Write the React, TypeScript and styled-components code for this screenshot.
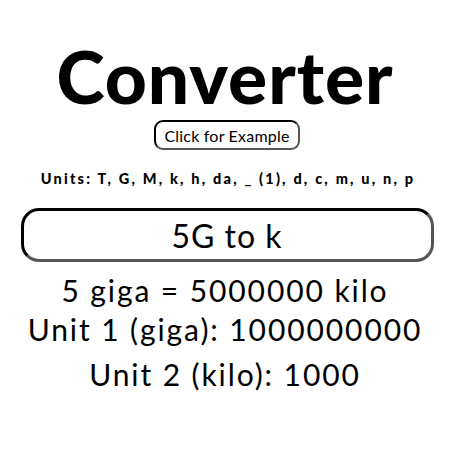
import styled, { createGlobalStyle } from 'styled-components';

const GlobalStyle = createGlobalStyle`
  html, body {
    margin: 0;
    padding: 0;
    background: #ffffff;
  }
  body {
    font-family: "Lato", "Noto Sans", sans-serif;
    color: #000000;
  }
`;

const Page = styled.div`
  width: 450px;
  height: 450px;
  display: flex;
  flex-direction: column;
  align-items: center;
  padding-top: 36px;
  box-sizing: border-box;
`;

const Title = styled.h1`
  margin: 0;
  font-size: 73px;
  font-weight: 900;
  line-height: 80px;
  letter-spacing: 1px;
`;

const ExampleButton = styled.button`
  margin-top: 4px;
  margin-left: 4px;
  height: 30px;
  padding: 0 8px;
  font-family: "Lato", sans-serif;
  font-size: 16px;
  letter-spacing: 0.2px;
  color: #000;
  background: #fff;
  border: 2px solid;
  border-color: #000 #555 #555 #000;
  border-radius: 9px;
  cursor: pointer;
`;

const UnitsLine = styled.p`
  margin: 20px 0 0;
  margin-left: 6px;
  font-size: 14.5px;
  font-weight: 900;
  letter-spacing: 2.2px;
`;

const Field = styled.input`
  margin-top: 21px;
  margin-left: 4px;
  width: 413px;
  height: 54px;
  box-sizing: border-box;
  border: 3px solid;
  border-color: #000 #555 #555 #000;
  border-radius: 18px;
  text-align: center;
  font-family: "Lato", sans-serif;
  font-size: 32px;
  letter-spacing: 1px;
  color: #000;
  outline: none;
`;

const Results = styled.div`
  margin-top: 8px;
  display: flex;
  flex-direction: column;
  align-items: center;
`;

const ResultLine = styled.div<{ $gap?: number }>`
  margin-top: ${(props) => props.$gap ?? 0}px;
  font-size: 30px;
  line-height: 40px;
  letter-spacing: 1.9px;
`;

export default function App() {
  return (
    <>
      <GlobalStyle />
      <Page>
        <Title>Converter</Title>
        <ExampleButton type="button">Click for Example</ExampleButton>
        <UnitsLine>Units: T, G, M, k, h, da, _ (1), d, c, m, u, n, p</UnitsLine>
        <Field defaultValue="5G to k" />
        <Results>
          <ResultLine>5 giga = 5000000 kilo</ResultLine>
          <ResultLine $gap={-1}>Unit 1 (giga): 1000000000</ResultLine>
          <ResultLine $gap={5}>Unit 2 (kilo): 1000</ResultLine>
        </Results>
      </Page>
    </>
  );
}
